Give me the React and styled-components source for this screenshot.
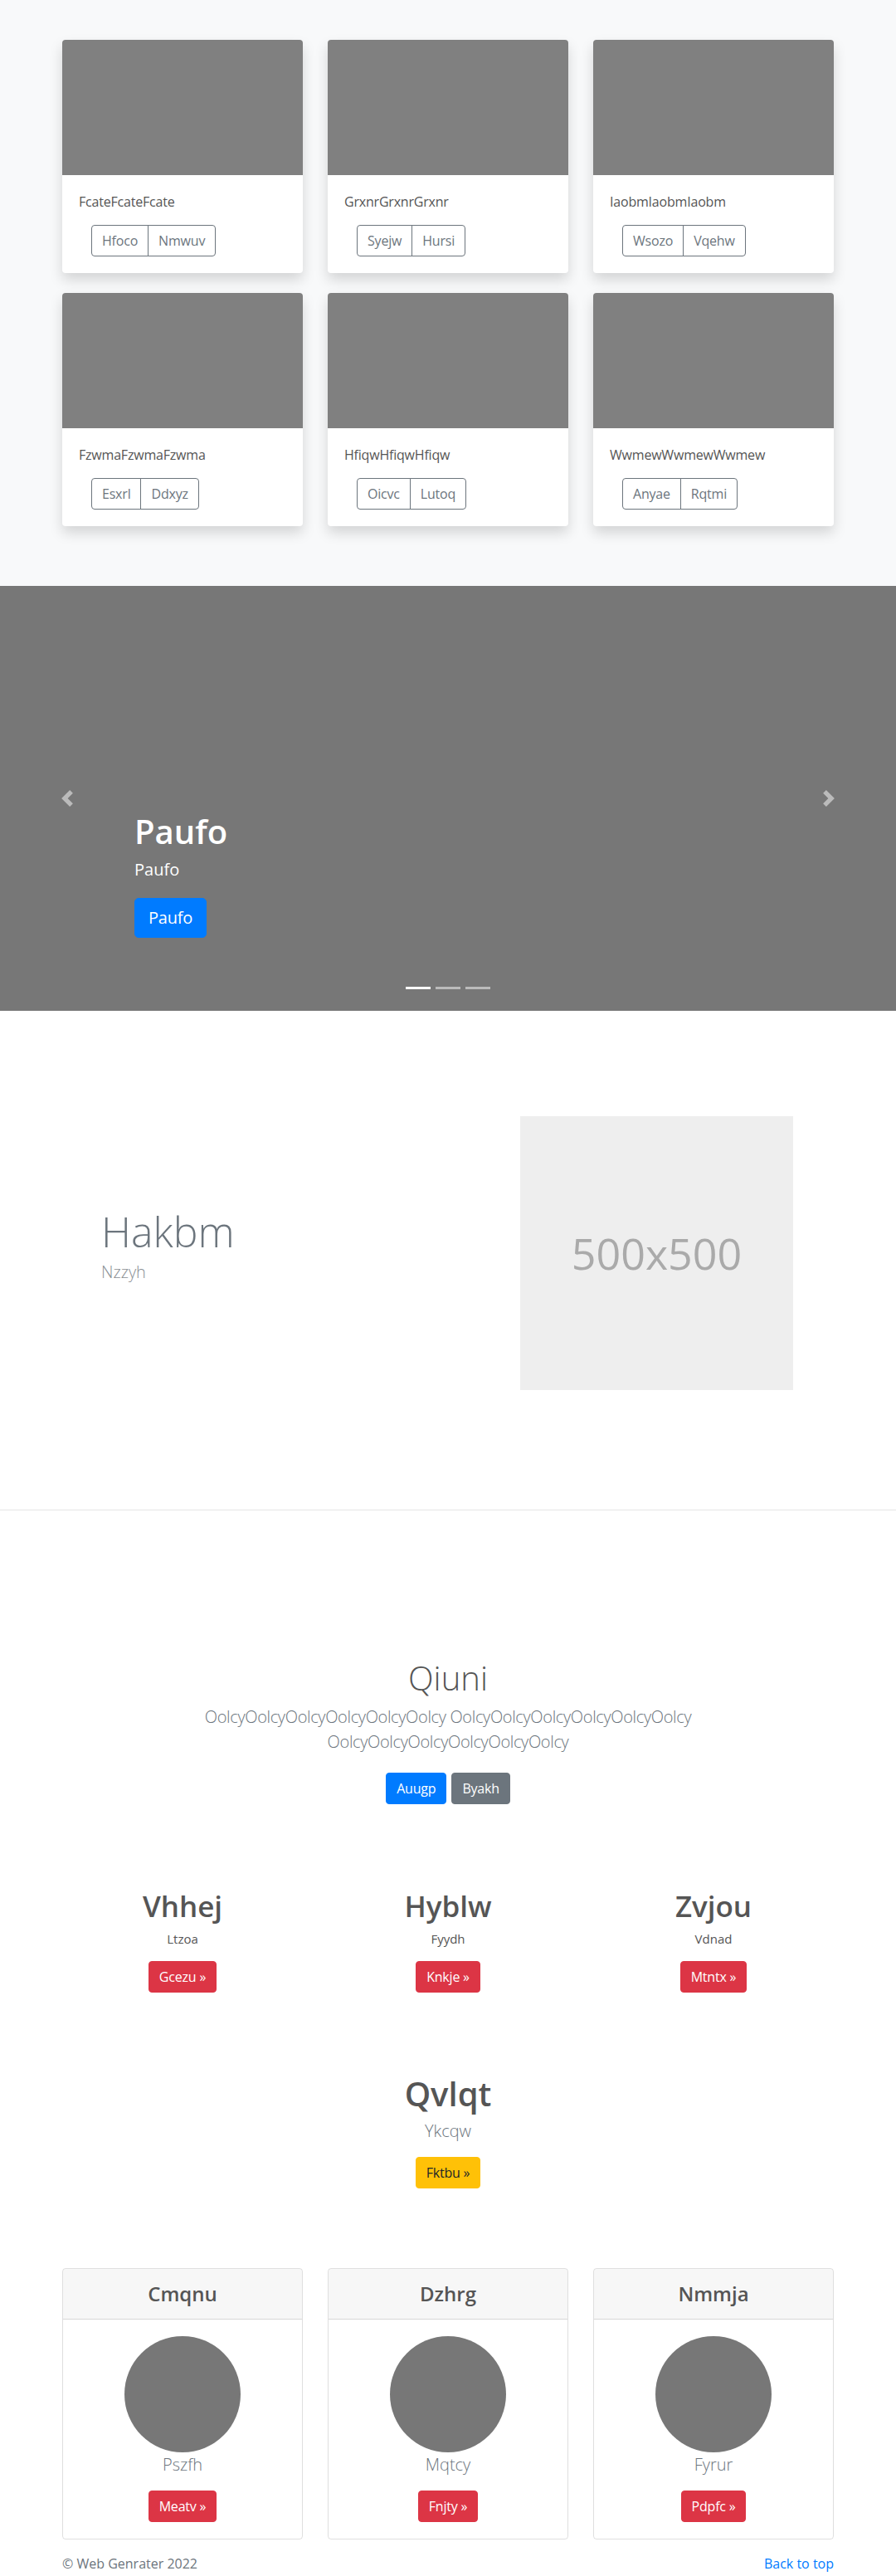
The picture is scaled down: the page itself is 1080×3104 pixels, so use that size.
import React from 'react';
import styled, { createGlobalStyle } from 'styled-components';

const GlobalStyle = createGlobalStyle`
  * { box-sizing: border-box; }
  body {
    margin: 0;
    font-family: "Open Sans", "Noto Sans", sans-serif;
    font-size: 16px;
    line-height: 1.5;
    color: #555;
    background: #fff;
  }
  h1, h2, h3, h4, p { margin: 0; }
`;

const Container = styled.div`
  width: 930px;
  margin: 0 auto;
`;

const Grid = styled.div`
  display: grid;
  grid-template-columns: repeat(3, 290px);
  column-gap: 30px;
  row-gap: 24px;
`;

/* album */
const Album = styled.section`
  background: #f8f9fa;
  padding: 48px 0 72px;
`;

const Card = styled.div`
  background: #fff;
  border-radius: 4px;
  overflow: hidden;
  box-shadow: 0 8px 16px rgba(0, 0, 0, 0.15);
`;

const CardImage = styled.div`
  height: 163px;
  background: #808080;
`;

const CardBody = styled.div`
  padding: 20px;
`;

const CardText = styled.p`
  margin-bottom: 16px;
  color: #555;
  letter-spacing: -0.2px;
`;

const ButtonGroup = styled.div`
  display: inline-flex;
  margin-left: 15px;
`;

const OutlineButton = styled.button`
  font: inherit;
  font-size: 16px;
  line-height: 24px;
  padding: 6px 12px;
  color: #6c757d;
  background: transparent;
  border: 1px solid #6c757d;
  border-radius: 0;
  letter-spacing: -0.2px;
  cursor: pointer;

  &:first-child {
    border-radius: 4px 0 0 4px;
  }
  &:last-child {
    margin-left: -1px;
    border-radius: 0 4px 4px 0;
  }
`;

/* carousel */
const Carousel = styled.section`
  position: relative;
  height: 512px;
  background: #777;
  display: flex;
  align-items: flex-end;
  padding: 0 15% 68px;
`;

const Caption = styled.div`
  color: #fff;
`;

const CaptionTitle = styled.h1`
  font-size: 40px;
  font-weight: 600;
  line-height: 1.2;
  margin-bottom: 8px;
`;

const CaptionText = styled.p`
  font-size: 20px;
  line-height: 1.4;
  margin-bottom: 20px;
`;

const Button = styled.button`
  font: inherit;
  font-size: ${(p) => (p.$large ? '20px' : '16px')};
  line-height: ${(p) => (p.$large ? '30px' : '24px')};
  padding: ${(p) => (p.$large ? '8px 16px' : '6px 12px')};
  color: ${(p) => p.$color || '#fff'};
  background: ${(p) => p.$bg};
  border: 1px solid ${(p) => p.$bg};
  border-radius: ${(p) => (p.$large ? '5px' : '4px')};
  letter-spacing: -0.2px;
  cursor: pointer;
`;

const Control = styled.div`
  position: absolute;
  top: 0;
  bottom: 0;
  ${(p) => (p.$side === 'left' ? 'left: 0;' : 'right: 0;')}
  width: 15%;
  display: flex;
  align-items: center;
  justify-content: center;
  opacity: 0.5;
`;

const Indicators = styled.ol`
  position: absolute;
  left: 0;
  right: 0;
  bottom: 16px;
  margin: 0;
  padding: 0;
  list-style: none;
  display: flex;
  justify-content: center;
`;

const Indicator = styled.li`
  width: 30px;
  height: 3px;
  margin: 10px 3px;
  background: #fff;
  opacity: ${(p) => (p.$active ? 1 : 0.5)};
`;

/* featurette */
const Featurette = styled.section`
  padding: 127px 0 144px;
`;

const FeatureRow = styled.div`
  display: flex;
  align-items: flex-start;
  padding: 0 49px 0 47px;
`;

const FeatureText = styled.div`
  flex: 1;
  padding-top: 106px;
`;

const FeatureHeading = styled.h2`
  font-size: 50px;
  font-weight: 300;
  line-height: 67px;
  color: #6c757d;
`;

const FeatureLead = styled.p`
  font-size: 20px;
  font-weight: 300;
  line-height: 30px;
  color: #8a8f94;
`;

const Placeholder = styled.div`
  width: 329px;
  height: 330px;
  background: #eee;
  color: #aaa;
  display: flex;
  align-items: center;
  justify-content: center;
  font-size: 52px;
  font-weight: 400;
`;

const Divider = styled.hr`
  margin: 0;
  border: 0;
  border-top: 1px solid rgba(0, 0, 0, 0.1);
`;

/* hero */
const Hero = styled.section`
  padding-top: 178px;
  text-align: center;
`;

const HeroTitle = styled.h1`
  font-size: 40px;
  font-weight: 300;
  line-height: 48px;
  color: #555;
  margin-bottom: 8px;
`;

const HeroLead = styled.p`
  max-width: 610px;
  margin: 0 auto 22px;
  font-size: 20px;
  font-weight: 300;
  line-height: 30px;
  letter-spacing: -0.35px;
  color: #6c757d;
`;

const ButtonRow = styled.div`
  display: flex;
  justify-content: center;
  gap: 6px;
`;

/* marketing columns */
const Marketing = styled.section`
  padding-top: 101px;
`;

const Column = styled.div`
  text-align: center;
`;

const ColumnTitle = styled.h2`
  font-size: 35px;
  font-weight: 600;
  line-height: 43px;
  color: #555;
  margin-bottom: 8px;
`;

const ColumnText = styled.p`
  font-size: 15px;
  line-height: 21px;
  color: #555;
  margin-bottom: 16px;
`;

const Callout = styled.section`
  padding-top: 98px;
  text-align: center;
`;

const CalloutTitle = styled.h2`
  font-size: 40px;
  font-weight: 600;
  line-height: 48px;
  color: #555;
  margin-bottom: 6px;
`;

const CalloutText = styled.p`
  font-size: 20px;
  font-weight: 300;
  line-height: 30px;
  color: #6c757d;
  margin-bottom: 16px;
`;

/* profile cards */
const Profiles = styled.section`
  padding-top: 96px;
`;

const ProfileCard = styled.div`
  border: 1px solid rgba(0, 0, 0, 0.125);
  border-radius: 4px;
  text-align: center;
  overflow: hidden;
`;

const ProfileHeader = styled.div`
  padding: 15px 20px;
  background: rgba(0, 0, 0, 0.03);
  border-bottom: 1px solid rgba(0, 0, 0, 0.125);
`;

const ProfileTitle = styled.h4`
  font-size: 24px;
  font-weight: 600;
  line-height: 30px;
  color: #555;
`;

const ProfileBody = styled.div`
  padding: 20px;
  display: flex;
  flex-direction: column;
  align-items: center;
`;

const Avatar = styled.div`
  width: 140px;
  height: 140px;
  border-radius: 50%;
  background: #777;
`;

const ProfileName = styled.p`
  font-size: 20px;
  font-weight: 300;
  line-height: 30px;
  color: #6c757d;
  margin-bottom: 16px;
`;

const Footer = styled.footer`
  padding: 17px 0 40px;
`;

const FooterRow = styled.div`
  display: flex;
  justify-content: space-between;
  color: #6c757d;
`;

const TopLink = styled.a`
  color: #007bff;
  text-decoration: none;
`;

const albumCards = [
  { title: 'FcateFcateFcate', buttons: ['Hfoco', 'Nmwuv'] },
  { title: 'GrxnrGrxnrGrxnr', buttons: ['Syejw', 'Hursi'] },
  { title: 'IaobmIaobmIaobm', buttons: ['Wsozo', 'Vqehw'] },
  { title: 'FzwmaFzwmaFzwma', buttons: ['Esxrl', 'Ddxyz'] },
  { title: 'HfiqwHfiqwHfiqw', buttons: ['Oicvc', 'Lutoq'] },
  { title: 'WwmewWwmewWwmew', buttons: ['Anyae', 'Rqtmi'] },
];

const columns = [
  { title: 'Vhhej', text: 'Ltzoa', button: 'Gcezu »' },
  { title: 'Hyblw', text: 'Fyydh', button: 'Knkje »' },
  { title: 'Zvjou', text: 'Vdnad', button: 'Mtntx »' },
];

const profiles = [
  { title: 'Cmqnu', name: 'Pszfh', button: 'Meatv »' },
  { title: 'Dzhrg', name: 'Mqtcy', button: 'Fnjty »' },
  { title: 'Nmmja', name: 'Fyrur', button: 'Pdpfc »' },
];

const Chevron = ({ dir }) => (
  <svg width="20" height="20" viewBox="0 0 8 8" fill="#fff">
    {dir === 'left' ? (
      <path d="M5.25 0l-4 4 4 4 1.5-1.5L4.25 4l2.5-2.5L5.25 0z" />
    ) : (
      <path d="M2.75 0l-1.5 1.5L3.75 4l-2.5 2.5L2.75 8l4-4-4-4z" />
    )}
  </svg>
);

const lead = 'OolcyOolcyOolcyOolcyOolcyOolcy';

function App() {
  return (
    <>
      <GlobalStyle />
      <Album>
        <Container>
          <Grid>
            {albumCards.map((card) => (
              <Card key={card.title}>
                <CardImage />
                <CardBody>
                  <CardText>{card.title}</CardText>
                  <ButtonGroup>
                    {card.buttons.map((b) => (
                      <OutlineButton key={b}>{b}</OutlineButton>
                    ))}
                  </ButtonGroup>
                </CardBody>
              </Card>
            ))}
          </Grid>
        </Container>
      </Album>

      <Carousel>
        <Indicators>
          <Indicator $active />
          <Indicator />
          <Indicator />
        </Indicators>
        <Caption>
          <CaptionTitle>Paufo</CaptionTitle>
          <CaptionText>Paufo</CaptionText>
          <CaptionText>
            <Button $large $bg="#007bff">Paufo</Button>
          </CaptionText>
        </Caption>
        <Control $side="left">
          <Chevron dir="left" />
        </Control>
        <Control $side="right">
          <Chevron dir="right" />
        </Control>
      </Carousel>

      <Featurette>
        <Container>
          <FeatureRow>
            <FeatureText>
              <FeatureHeading>Hakbm</FeatureHeading>
              <FeatureLead>Nzzyh</FeatureLead>
            </FeatureText>
            <Placeholder>500x500</Placeholder>
          </FeatureRow>
        </Container>
      </Featurette>
      <Divider />

      <Hero>
        <HeroTitle>Qiuni</HeroTitle>
        <HeroLead>
          {lead} {lead} {lead}
        </HeroLead>
        <ButtonRow>
          <Button $bg="#007bff">Auugp</Button>
          <Button $bg="#6c757d">Byakh</Button>
        </ButtonRow>
      </Hero>

      <Marketing>
        <Container>
          <Grid>
            {columns.map((c) => (
              <Column key={c.title}>
                <ColumnTitle>{c.title}</ColumnTitle>
                <ColumnText>{c.text}</ColumnText>
                <Button $bg="#dc3545">{c.button}</Button>
              </Column>
            ))}
          </Grid>
        </Container>
      </Marketing>

      <Callout>
        <CalloutTitle>Qvlqt</CalloutTitle>
        <CalloutText>Ykcqw</CalloutText>
        <Button $bg="#ffc107" $color="#212529">Fktbu »</Button>
      </Callout>

      <Profiles>
        <Container>
          <Grid>
            {profiles.map((p) => (
              <ProfileCard key={p.title}>
                <ProfileHeader>
                  <ProfileTitle>{p.title}</ProfileTitle>
                </ProfileHeader>
                <ProfileBody>
                  <Avatar />
                  <ProfileName>{p.name}</ProfileName>
                  <Button $bg="#dc3545">{p.button}</Button>
                </ProfileBody>
              </ProfileCard>
            ))}
          </Grid>
        </Container>
      </Profiles>

      <Footer>
        <Container>
          <FooterRow>
            <span>© Web Genrater 2022</span>
            <TopLink href="#">Back to top</TopLink>
          </FooterRow>
        </Container>
      </Footer>
    </>
  );
}

export default App;
